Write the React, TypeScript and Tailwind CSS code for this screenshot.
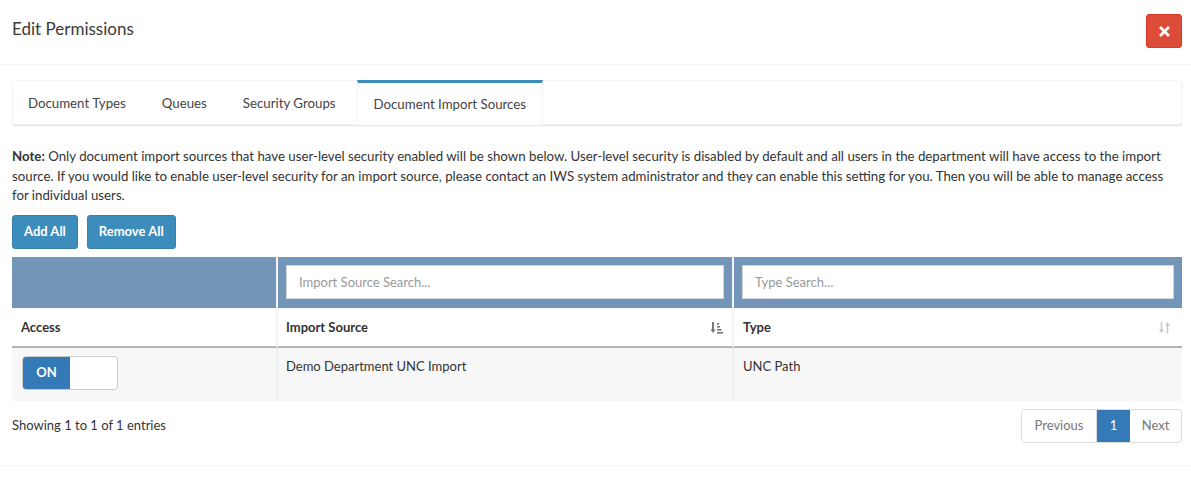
import React, { useState } from 'react';

const FONT = { fontFamily: 'Lato, "Liberation Sans", sans-serif' };

const TABS = ['Document Types', 'Queues', 'Security Groups', 'Document Import Sources'];

const SortAsc = () => (
  <svg width="13" height="13" viewBox="0 0 13 13" className="text-[#777]">
    <path d="M3 1v9" stroke="currentColor" strokeWidth="2" />
    <path d="M0.5 8.5L3 12l2.5-3.5z" fill="currentColor" />
    <rect x="7" y="2" width="2" height="1.6" fill="currentColor" />
    <rect x="7" y="5" width="3" height="1.6" fill="currentColor" />
    <rect x="7" y="8" width="4.5" height="1.6" fill="currentColor" />
    <rect x="7" y="11" width="6" height="1.6" fill="currentColor" />
  </svg>
);

const SortBoth = () => (
  <svg width="13" height="13" viewBox="0 0 13 13" className="text-[#c8c8c8]">
    <path d="M3.5 1v9" stroke="currentColor" strokeWidth="1.6" />
    <path d="M1 8.5L3.5 12l2.5-3.5z" fill="currentColor" />
    <path d="M9.5 3v9.5" stroke="currentColor" strokeWidth="1.6" />
    <path d="M7 4.5L9.5 1 12 4.5z" fill="currentColor" />
  </svg>
);

export default function App() {
  const [on, setOn] = useState(true);

  return (
    <div className="w-[1191px] h-[480px] bg-white text-[#333] overflow-hidden" style={FONT}>
      {/* Modal header */}
      <div className="h-[65px] border-b border-[#f4f4f4] flex items-center justify-between pl-3 pr-[9px]">
        <h4 className="text-[17px] leading-none -mt-[8px] text-[#3a3a3a]">Edit Permissions</h4>
        <button className="w-[36px] h-[34px] -mt-[2px] rounded-[3px] bg-[#dd4b39] border border-[#d73925] flex items-center justify-center">
          <svg width="11" height="11" viewBox="0 0 11 11">
            <path d="M2 2l7 7M9 2l-7 7" stroke="white" strokeWidth="2.8" strokeLinecap="square" />
          </svg>
        </button>
      </div>

      <div className="pl-3 pr-[9px] pt-[15px] text-[13.25px]">
        {/* Tabs */}
        <div className="h-[45px] bg-white rounded-[3px] shadow-[0_1px_1px_rgba(0,0,0,0.12)] border border-[#f4f4f4] flex">
          {TABS.map((t, i) => {
            const active = i === 3;
            return (
              <div
                key={t}
                className={
                  active
                    ? 'h-[45px] -mt-px px-[16px] border-t-[3px] border-t-[#3c8dbc] border-x border-x-[#f4f4f4] bg-white flex items-center text-[#444]'
                    : 'h-full pl-[15px] pr-[15px] mr-[6px] flex items-center text-[#444]'
                }
              >
                <span className={active ? 'mt-[1px]' : 'mt-[2px]'}>{t}</span>
              </div>
            );
          })}
        </div>

        {/* Note */}
        <p className="mt-[22px] leading-[19.5px] text-[#333]">
          <b>Note:</b> Only document import sources that have user-level security enabled will be shown below. User-level security is disabled by default and all users in the department will have access to the import source. If you would like to enable user-level security for an import source, please contact an IWS system administrator and they can enable this setting for you. Then you will be able to manage access for individual users.
        </p>

        {/* Buttons */}
        <div className="mt-[9px] flex gap-[9px]">
          <button className="h-[34px] px-[11px] rounded-[3px] bg-[#3c8dbc] border border-[#367fa9] text-white text-[13px] font-bold">
            Add All
          </button>
          <button className="h-[34px] px-[11px] rounded-[3px] bg-[#3c8dbc] border border-[#367fa9] text-white text-[13px] font-bold">
            Remove All
          </button>
        </div>

        {/* Table */}
        <div className="mt-[8px] grid grid-cols-[266px_456px_448px] text-[13px]">
          {/* filter row */}
          <div className="h-[51px] bg-[#7396b8] border-r-2 border-[#f4f4f4]" />
          <div className="h-[51px] bg-[#7396b8] border-r-2 border-[#f4f4f4] px-[8px] flex items-center">
            <input
              placeholder="Import Source Search..."
              className="w-full h-[34px] bg-white border border-[#d2d6de] px-[12px] text-[13px] placeholder-[#999] outline-none"
              style={FONT}
            />
          </div>
          <div className="h-[51px] bg-[#7396b8] px-[8px] flex items-center">
            <input
              placeholder="Type Search..."
              className="w-full h-[34px] bg-white border border-[#d2d6de] px-[12px] text-[13px] placeholder-[#999] outline-none"
              style={FONT}
            />
          </div>

          {/* header row */}
          <div className="h-[40px] border-t border-[#f4f4f4] border-b-2 border-b-[#b4b4b4] border-r-2 border-r-[#f4f4f4] px-[9px] pt-px flex items-center font-bold">
            Access
          </div>
          <div className="h-[40px] border-t border-[#f4f4f4] border-b-2 border-b-[#b4b4b4] border-r-2 border-r-[#f4f4f4] pl-[8px] pr-[9px] pt-px flex items-center justify-between font-bold">
            <span>Import Source</span>
            <SortAsc />
          </div>
          <div className="h-[40px] border-t border-[#f4f4f4] border-b-2 border-b-[#b4b4b4] pl-[9px] pr-[11px] pt-px flex items-center justify-between font-bold">
            <span>Type</span>
            <SortBoth />
          </div>

          {/* data row */}
          <div className="h-[53px] bg-[#f7f7f7] border-r-2 border-[#f0f0f0] px-[10px] pt-[8px]">
            <button
              onClick={() => setOn(!on)}
              className="w-[96px] h-[34px] rounded-[4px] border border-[#ccc] bg-white flex overflow-hidden"
            >
              <span className="w-[47px] h-full bg-[#337ab7] text-white font-bold flex items-center justify-center text-[13px]">
                {on ? 'ON' : ''}
              </span>
            </button>
          </div>
          <div className="h-[53px] bg-[#f7f7f7] border-r-2 border-[#f0f0f0] px-[8px] pt-[9px]">
            Demo Department UNC Import
          </div>
          <div className="h-[53px] bg-[#f7f7f7] px-[9px] pt-[9px]">UNC Path</div>
        </div>

        {/* Footer info + pagination */}
        <div className="mt-[8px] flex items-center justify-between">
          <span className="text-[13px]">Showing 1 to 1 of 1 entries</span>
          <div className="flex h-[34px] text-[13px] border border-[#ddd] rounded-[4px] overflow-hidden">
            <span className="w-[75px] flex items-center justify-center text-[#777] border-r border-[#ddd]">Previous</span>
            <span className="w-[33px] flex items-center justify-center bg-[#337ab7] text-white">1</span>
            <span className="w-[51px] flex items-center justify-center text-[#777]">Next</span>
          </div>
        </div>
      </div>

      <div className="mt-[22px] border-t border-[#f4f4f4]" />
    </div>
  );
}
